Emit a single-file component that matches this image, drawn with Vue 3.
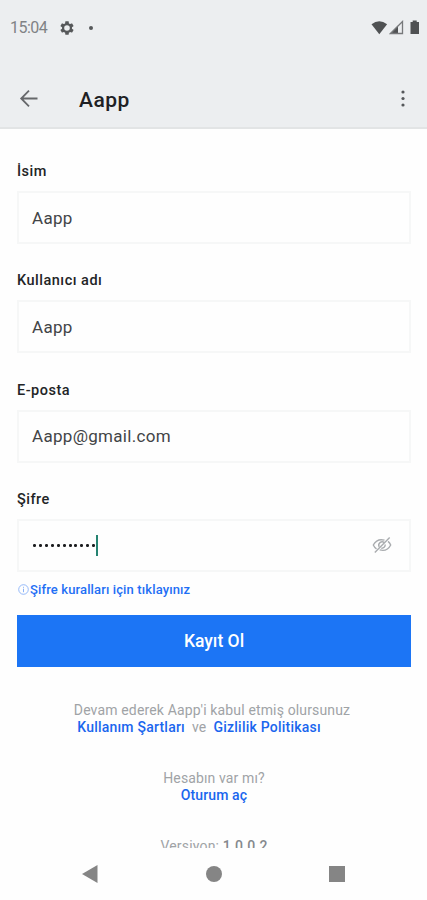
<script setup>
import { ref } from 'vue';

const appName = 'Aapp';

// Text fields above the password
const fields = ref([
  { id: 'name', label: 'İsim', value: 'Aapp' },
  { id: 'username', label: 'Kullanıcı adı', value: 'Aapp' },
  { id: 'email', label: 'E-posta', value: 'Aapp@gmail.com' }
]);

const passwordLength = 11;
</script>

<template>
  <div class="screen">
    <header class="header">
      <div class="status-bar">
        <span class="clock">15:04</span>
        <svg class="gear" width="16" height="16" viewBox="0 0 24 24">
          <path fill="#56585a" fill-rule="evenodd" d="M19.4 13c0-.3.1-.6.1-1s0-.7-.1-1l2.2-1.600c.2-.2.2-.4.1-.6l-2-3.500c-.1-.2-.4-.3-.6-.2l-2.500 1a7 7 0 0 0-1.700-1L14.500 2.400c0-.2-.2-.4-.5-.4h-4c-.3 0-.5.2-.5.4l-.4 2.700a7 7 0 0 0-1.700 1l-2.500-1c-.2-.1-.5 0-.6.200l-2 3.500c-.1.200-.1.500.1.600L4.600 11a8 8 0 0 0 0 2l-2.200 1.600c-.2.200-.2.400-.1.600l2 3.500c.1.200.4.300.6.200l2.500-1c.5.400 1.100.8 1.700 1l.4 2.700c0 .2.200.4.500.4h4c.3 0 .5-.2.500-.4l.4-2.700c.6-.2 1.200-.6 1.700-1l2.500 1c.2.100.5 0 .6-.2l2-3.500c.1-.2.1-.5-.1-.6zM12 16.200a4.200 4.200 0 1 1 0-8.400 4.200 4.200 0 0 1 0 8.400z" />
        </svg>
        <span class="status-dot"></span>
        <svg class="signals" width="50" height="16" viewBox="0 0 50 16">
          <path fill="#4f5153" d="M0.500 4.200Q8.300-1.600 16.100 4.200L8.300 14.200z" />
          <path fill="#4f5153" d="M18.500 14L27 5.500V14z" />
          <path fill="none" stroke="#77797b" stroke-width="1.300" d="M19.500 13.500L31.500 1.500V13.500z" />
          <path fill="#4f5153" d="M39.500 2h2.200V0.500h4V2H48v12h-8.500z" />
        </svg>
      </div>
      <div class="app-bar">
        <svg class="back" width="20" height="18" viewBox="0 0 20 18">
          <path fill="none" stroke="#66686b" stroke-width="1.800" d="M18.500 8.500H2.500M10 0.700L2.200 8.500L10 16.300" />
        </svg>
        <h1 class="title">{{ appName }}</h1>
        <svg class="more" width="4" height="18" viewBox="0 0 4 18">
          <circle cx="2" cy="2" r="1.600" fill="#55575a" />
          <circle cx="2" cy="8.500" r="1.600" fill="#55575a" />
          <circle cx="2" cy="15" r="1.600" fill="#55575a" />
        </svg>
      </div>
    </header>

    <main class="content">
      <div v-for="field in fields" :key="field.id" class="field">
        <div class="label">{{ field.label }}</div>
        <div class="input"><span class="value">{{ field.value }}</span></div>
      </div>

      <div class="field password">
        <div class="label">Şifre</div>
        <div class="input">
          <span v-for="n in passwordLength" :key="n" class="dot"></span>
          <span class="caret"></span>
          <svg class="eye" width="20" height="18" viewBox="0 0 20 18">
            <g fill="none" stroke="#a9acaf" stroke-width="1.400">
              <path d="M12.500 4.200C7.500 2.800 3.500 5 1.300 9C2.100 10.700 3.200 12 4.500 12.900" />
              <path d="M16 5.400C17.200 6.400 18.100 7.600 18.700 9C16.500 13.300 12.500 15.200 7.700 13.900" />
              <path d="M12.300 6.600A3.400 3.400 0 0 0 7.200 10.900M13.200 8.500A3.400 3.400 0 0 1 9.300 12.200" />
              <path d="M2.800 16.500L17.700 1.500" />
            </g>
          </svg>
        </div>
      </div>

      <a class="rules">
        <svg width="11" height="11" viewBox="0 0 11 11">
          <circle cx="5.500" cy="5.500" r="4.800" fill="none" stroke="#8ab2f8" stroke-width="0.900" />
          <path stroke="#8ab2f8" stroke-width="1" d="M5.500 2.800v1M5.500 4.700v3.500" />
        </svg>
        <span>Şifre kuralları için tıklayınız</span>
      </a>

      <button class="submit">Kayıt Ol</button>

      <div class="terms">
        <div class="terms-text">Devam ederek {{ appName }}'i kabul etmiş olursunuz</div>
        <div class="terms-links">
          <a>Kullanım Şartları</a><span>ve</span><a>Gizlilik Politikası</a>
        </div>
      </div>

      <div class="login">
        <div>Hesabın var mı?</div>
        <a>Oturum aç</a>
      </div>

      <div class="version">Versiyon: <b>1.0.0.2</b></div>
    </main>

    <nav class="nav-bar">
      <svg width="16" height="18" viewBox="0 0 16 18">
        <path fill="#858585" d="M15.500 0v18L0 9z" />
      </svg>
      <svg width="16" height="16" viewBox="0 0 16 16">
        <circle cx="8" cy="8" r="8" fill="#858585" />
      </svg>
      <svg width="16" height="16" viewBox="0 0 16 16">
        <rect width="16" height="16" fill="#858585" />
      </svg>
    </nav>
  </div>
</template>

<style>
body {
  margin: 0;
  background: #fff;
}
</style>

<style scoped>
.screen {
  display: flex;
  flex-direction: column;
  width: 427px;
  height: 900px;
  overflow: hidden;
  background: #fefefe;
  font-family: Roboto, "Liberation Sans", sans-serif;
}

.header {
  flex: none;
  box-sizing: border-box;
  height: 129px;
  background: #eceef0;
  border-bottom: 2px solid #e2e4e5;
}

.status-bar {
  display: flex;
  align-items: center;
  height: 55px;
  padding: 0 6px 0 10px;
}

.clock {
  width: 49px;
  font-size: 16px;
  letter-spacing: -0.5px;
  color: #808285;
}

.status-dot {
  width: 4px;
  height: 4px;
  margin-left: 14px;
  border-radius: 50%;
  background: #56585a;
}

.signals {
  margin-left: auto;
}

.app-bar {
  display: flex;
  align-items: center;
  height: 88px;
  box-sizing: border-box;
  padding: 0 22px 0 19px;
}

.title {
  margin: 0 0 0 40px;
  padding-top: 2px;
  font-size: 21px;
  font-weight: 500;
  letter-spacing: 0.5px;
  color: #202124;
}

.more {
  margin-left: auto;
}

.content {
  flex: none;
  box-sizing: border-box;
  height: 719px;
  padding: 34px 16px 0 17px;
  overflow: hidden;
}

.field {
  height: 109.3px;
}

.label {
  height: 18px;
  margin-bottom: 10px;
  font-size: 14.5px;
  font-weight: 500;
  line-height: 18px;
  letter-spacing: 0.5px;
  color: #222426;
}

.input {
  display: flex;
  align-items: center;
  box-sizing: border-box;
  height: 53px;
  padding: 0 17px 0 13px;
  border: 2px solid #f6f7f7;
  background: #fefefe;
  font-size: 17px;
  letter-spacing: 0.3px;
  color: #424446;
}

.password {
  height: 91px;
}

.dot {
  width: 3px;
  height: 3px;
  margin: 0 1.500px 0 1.360px;
  border-radius: 40%;
  background: #1d1e20;
}

.caret {
  width: 2px;
  height: 21px;
  background: #258371;
}

.eye {
  margin-left: auto;
}

.rules {
  display: flex;
  align-items: center;
  gap: 1px;
  height: 15px;
  padding-left: 1px;
  margin-bottom: 18px;
  font-size: 13px;
  font-weight: 500;
  letter-spacing: 0.130px;
  color: #1f6ff5;
}

.submit {
  display: block;
  width: 100%;
  height: 52px;
  padding: 0;
  border: 0;
  background: #1c75f5;
  font-family: inherit;
  font-size: 17.5px;
  font-weight: 500;
  color: #fff;
}

.terms {
  margin-top: 35px;
  font-size: 14px;
  line-height: 17px;
  letter-spacing: 0.150px;
  text-align: center;
  color: #a0a3a6;
}

.terms-text {
  padding-right: 4px;
}

.terms-links {
  display: flex;
  justify-content: center;
  gap: 7px;
  padding-right: 30px;
  letter-spacing: 0.220px;
}

.terms a,
.login a {
  font-weight: 500;
  color: #1a66ee;
}

.login {
  margin-top: 34px;
  font-size: 14px;
  line-height: 17px;
  letter-spacing: 0.120px;
  text-align: center;
  color: #a0a3a6;
}

.version {
  margin-top: 34px;
  font-size: 14px;
  line-height: 17px;
  letter-spacing: 0.180px;
  text-align: center;
  color: #a0a3a6;
}

.version b {
  font-weight: 500;
  color: #85898d;
}

.nav-bar {
  display: flex;
  flex: none;
  align-items: center;
  justify-content: space-between;
  height: 52px;
  padding: 0 82px;
}
</style>
